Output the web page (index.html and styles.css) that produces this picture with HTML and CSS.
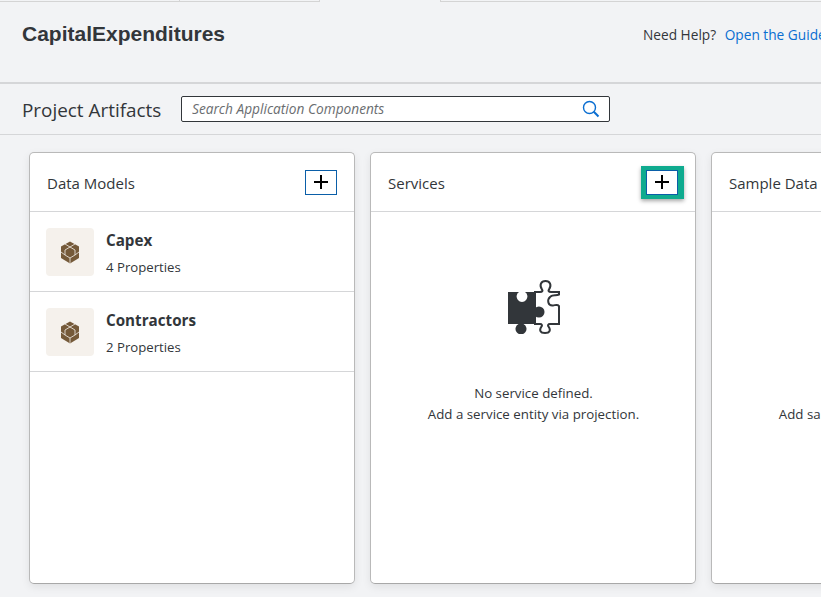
FILE: index.html
```html
<!DOCTYPE html>
<html>
<head>
    <title>CapitalExpenditures</title>
    <link rel="stylesheet" href="styles.css">
</head>
<body>
    <!-- Tab strip -->
    <div class="tabs">
        <div class="tab tab-first"></div>
        <div class="tab tab-second"></div>
        <div class="tab tab-active"></div>
        <div class="tab tab-rest"></div>
    </div>

    <!-- Project header -->
    <header class="project-header">
        <h1>CapitalExpenditures</h1>
        <div class="help">
            <span>Need Help?</span>
            <a href="#">Open the Guided Development</a>
        </div>
    </header>

    <!-- Toolbar -->
    <div class="toolbar">
        <h2>Project Artifacts</h2>
        <div class="search">
            <input type="text" placeholder="Search Application Components">
            <svg class="search-icon" width="18" height="18" viewBox="0 0 18 18">
                <circle cx="7.5" cy="7.5" r="6" fill="none" stroke="#0a6ed1" stroke-width="1.4"/>
                <path d="M11.8 11.8 L16.5 16.5" stroke="#0a6ed1" stroke-width="2" fill="none"/>
            </svg>
        </div>
    </div>

    <!-- Cards -->
    <main class="cards">
        <section class="card">
            <div class="card-head">
                <span>Data Models</span>
                <button class="add-btn"><svg width="16" height="16" viewBox="0 0 16 16"><path d="M8 1V15M1 8H15" stroke="#000" stroke-width="2"/></svg></button>
            </div>
            <div class="row">
                <div class="row-icon">
                    <svg width="22" height="23" viewBox="0 0 22 23"><use href="#cube"/></svg>
                </div>
                <div class="row-text">
                    <strong>Capex</strong>
                    <span>4 Properties</span>
                </div>
            </div>
            <div class="row">
                <div class="row-icon">
                    <svg width="22" height="23" viewBox="0 0 22 23"><use href="#cube"/></svg>
                </div>
                <div class="row-text">
                    <strong>Contractors</strong>
                    <span>2 Properties</span>
                </div>
            </div>
        </section>

        <section class="card">
            <div class="card-head">
                <span>Services</span>
                <div class="highlight">
                    <button class="add-btn"><svg width="16" height="16" viewBox="0 0 16 16"><path d="M8 1V15M1 8H15" stroke="#000" stroke-width="2"/></svg></button>
                </div>
            </div>
            <div class="empty">
                <svg class="puzzle" width="54" height="54" viewBox="0 0 54 54">
                    <path d="M28 12H33C35.500 12 36 10.500 35 9.500C32 5 34 1 38.500 1C43 1 45 5 42 9.500C41 10.500 41.500 12 44 12H52V14.500C49 16 46 14 43.500 16.500C39.500 20 41 26 46 25.500C49 25 50.500 24 52 26V44H43C41 44 40.500 45.500 41.500 46.500C44 50 43 53 38 53C33 53 32 50 34.500 46.500C35.500 45.500 35 44 33 44H28Z" fill="#fff" stroke="#32363a" stroke-width="2"/>
                    <path d="M1 12H12A5.400 5.400 0 1 0 18 12H28V28A5.600 5.600 0 1 1 28 36V44H16.500A5.500 5.500 0 1 1 11.500 44H1Z" fill="#32363a"/>
                </svg>
                <p>No service defined.</p>
                <p>Add a service entity via projection.</p>
            </div>
        </section>

        <section class="card">
            <div class="card-head">
                <span>Sample Data</span>
            </div>
            <div class="empty">
                <svg class="puzzle" width="54" height="54" viewBox="0 0 54 54"></svg>
                <p>&nbsp;</p>
                <p>Add sample data for the entity.</p>
            </div>
        </section>
    </main>

    <svg class="defs" width="0" height="0">
        <defs>
            <g id="cube">
                <path d="M11 .5L20 5.500V17L11 22.500L2 17V5.500Z" fill="#755a39"/>
                <path d="M11 6L16 9V14L11 17L6 14V9ZM11 6L6 3M11 6L16 3M2 11L6 14M20 11L16 14M11 17V22.500" fill="none" stroke="#f5f1ec" stroke-width=".8"/>
            </g>
        </defs>
    </svg>
</body>
</html>
```

FILE: styles.css
```css
html, body {
    margin: 0;
    height: 100%;
    overflow: hidden;
}
body {
    background: #f2f3f5;
    color: #32363a;
    font-family: "Open Sans", "Noto Sans", sans-serif;
    width: 821px;
    height: 597px;
    position: relative;
}

/* tabs */
.tabs {
    display: flex;
    height: 2px;
}
.tab {
    border-bottom: 1px solid #d4d4d4;
    box-sizing: border-box;
}
.tab-first { width: 180px; border-right: 1px solid #d4d4d4; }
.tab-second { width: 140px; border-right: 1px solid #d4d4d4; }
.tab-active { width: 120px; border-bottom: none; }
.tab-rest { flex: 1; border-left: 1px solid #d4d4d4; }

/* header */
.project-header {
    height: 82px;
    box-sizing: border-box;
    border-bottom: 2px solid #d5d6d8;
    display: flex;
    justify-content: space-between;
    align-items: flex-start;
    padding: 19px 0 0 22px;
    white-space: nowrap;
}
.project-header h1 {
    margin: 0;
    font-family: "Liberation Sans", sans-serif;
    font-size: 21px;
    line-height: 25px;
    font-weight: bold;
}
.help {
    font-size: 13.700px;
    line-height: 28px;
    width: 178px;
    overflow: hidden;
    flex: none;
}
.help a {
    color: #0a6ed1;
    text-decoration: none;
    margin-left: 5px;
}

/* toolbar */
.toolbar {
    height: 51px;
    box-sizing: border-box;
    border-bottom: 1px solid #d5d6d8;
    padding-left: 22px;
    display: flex;
    align-items: center;
}
.toolbar h2 {
    margin: 0;
    font-size: 18.900px;
    line-height: 26px;
    padding-top: 2px;
    font-weight: normal;
    width: 159px;
    white-space: nowrap;
}
.search {
    position: relative;
    width: 429px;
    height: 26px;
    box-sizing: border-box;
    border: 1px solid #32363a;
    border-radius: 2px;
    background: #fff;
}
.search input {
    width: 100%;
    height: 100%;
    box-sizing: border-box;
    border: none;
    background: transparent;
    padding: 0 30px 2px 10px;
    font-family: "Open Sans", sans-serif;
    font-size: 13.700px;
    font-style: italic;
}
.search input::placeholder {
    color: #6a6d70;
    opacity: 1;
}
.search-icon {
    position: absolute;
    right: 9px;
    top: 3px;
}

/* cards */
.cards {
    display: flex;
    gap: 15px;
    padding: 17px 0 0 29px;
}
.card {
    flex: none;
    width: 326px;
    height: 432px;
    box-sizing: border-box;
    background: #fff;
    border: 1px solid #b9b9b9;
    border-bottom-color: #a8a8a8;
    border-radius: 5px;
    box-shadow: 0 3px 8px rgba(0, 0, 0, .08);
}
.card-head {
    height: 59px;
    box-sizing: border-box;
    border-bottom: 1px solid #d5d6d8;
    padding: 0 17px;
    display: flex;
    align-items: center;
    justify-content: space-between;
    font-size: 15px;
}
.card-head > span { padding-top: 1px; }
.add-btn {
    width: 32px;
    height: 25px;
    padding: 0;
    background: #fff;
    border: 1px solid #0a5ea8;
    display: flex;
    align-items: center;
    justify-content: center;
}
.highlight {
    border-style: solid;
    border-color: #0fab8f;
    border-width: 4px 6px 4px 5px;
    box-shadow: 0 2px 4px rgba(0, 0, 0, .35);
    margin: -4px -6px -4px 0;
    display: flex;
}
.row {
    height: 80px;
    box-sizing: border-box;
    border-bottom: 1px solid #d5d6d8;
    padding: 16px 0 0 16px;
    display: flex;
}
.row-icon {
    width: 48px;
    height: 48px;
    background: #f5f1ec;
    border-radius: 4px;
    display: flex;
    align-items: center;
    justify-content: center;
}
.row-text {
    margin-left: 12px;
    display: flex;
    flex-direction: column;
    gap: 7px;
}
.row-text strong {
    font-size: 15.200px;
    line-height: 22px;
    margin-top: 1px;
}
.row-text span {
    font-size: 13.200px;
    line-height: 18px;
}

/* empty state */
.empty {
    display: flex;
    flex-direction: column;
    align-items: center;
    padding: 68px 0 0 1px;
    font-size: 13.300px;
}
.puzzle { margin-bottom: 49px; }
.empty p {
    margin: 0;
    line-height: 21px;
    white-space: nowrap;
}
.defs { position: absolute; }
```
